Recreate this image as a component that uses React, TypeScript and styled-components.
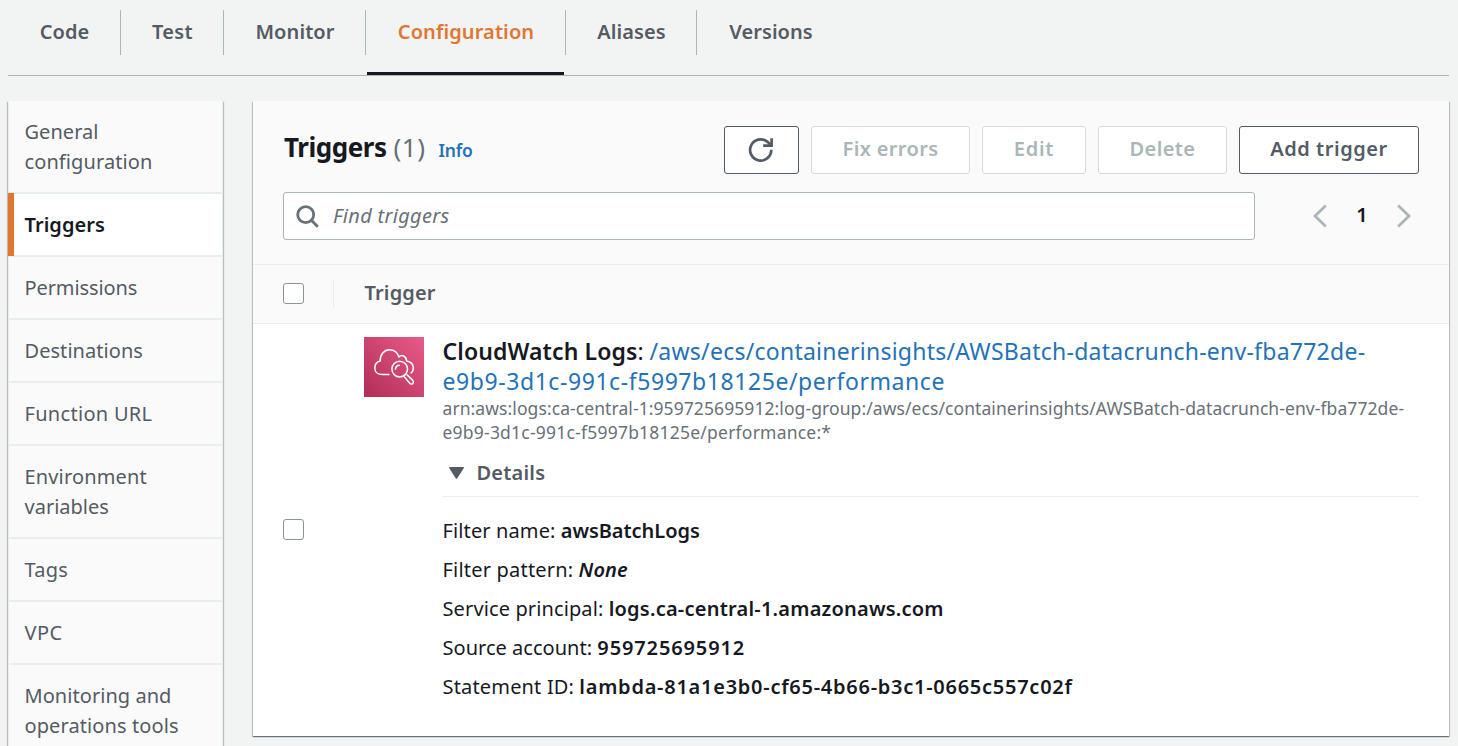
import React from "react";
import styled, { createGlobalStyle, css } from "styled-components";

const colors = {
  page: "#f2f3f3",
  surface: "#fafafa",
  line: "#eaeded",
  text: "#16191f",
  muted: "#545b64",
  soft: "#687078",
  disabled: "#aab7b8",
  accent: "#e07731",
  link: "#2472b8",
};

const GlobalStyle = createGlobalStyle`
  *, *::before, *::after { box-sizing: border-box; }
  html, body { margin: 0; height: 746px; overflow: hidden; background: ${colors.page}; }
  body {
    font: 400 20px/30px "Noto Sans", "Open Sans", sans-serif;
    color: ${colors.text};
  }
  button, input { font: inherit; }
`;

/* Tracking in pixels, tuned for each label */
const Track = styled.span<{ $ls?: number }>`
  letter-spacing: ${(p) => p.$ls ?? 0}px;
`;

const cardShadow = css`
  box-shadow: 0 1px 1px 0 rgba(0, 28, 36, 0.4), 1px 1px 1px 0 rgba(0, 28, 36, 0.18),
    -1px 1px 1px 0 rgba(0, 28, 36, 0.18);
`;

const Page = styled.div`
  height: 746px;
  padding: 0 9px 0 8px;
  overflow: hidden;
`;

const Tabs = styled.nav`
  display: flex;
  height: 76px;
  padding-top: 10px;
  border-bottom: 1px solid #aab7b8;
`;

const Tab = styled.a<{ $width: number; $active?: boolean }>`
  position: relative;
  width: ${(p) => p.$width}px;
  height: 45px;
  padding: 7px 0 0 1px;
  border-right: 1px solid #aab7b8;
  text-align: center;
  line-height: 30px;
  font-weight: 600;
  white-space: nowrap;
  color: ${(p) => (p.$active ? colors.accent : colors.muted)};
  &:last-child { border-right: 0; }
  ${(p) =>
    p.$active &&
    css`
      &::after {
        content: "";
        position: absolute;
        left: 1px;
        right: 1px;
        top: 62px;
        height: 3px;
        background: ${colors.text};
      }
    `}
`;

const Columns = styled.div`
  display: flex;
  align-items: flex-start;
  gap: 30px;
  padding-top: 25px;
`;

const SideNav = styled.nav`
  flex: none;
  width: 215px;
  height: 720px;
  border: solid ${colors.line};
  border-width: 0 1px;
  background: ${colors.surface};
  ${cardShadow}
`;

const SideItem = styled.a<{ $active?: boolean }>`
  position: relative;
  display: block;
  padding: 16px 14px 15px 15.5px;
  border-bottom: 2px solid ${colors.line};
  color: ${colors.muted};
  ${(p) =>
    p.$active &&
    css`
      background: #fff;
      color: ${colors.text};
      font-weight: 600;
      &::before {
        content: "";
        position: absolute;
        left: -1px;
        top: -1px;
        bottom: -1px;
        width: 6px;
        background: ${colors.accent};
      }
    `}
`;

const Line = styled(Track)`
  display: block;
  white-space: nowrap;
`;

const Panel = styled.section`
  flex: 1;
  height: 635px;
  background: #fff;
  ${cardShadow}
`;

const PanelHeader = styled.header`
  height: 164px;
  padding: 25px 30px 0;
  background: ${colors.surface};
  border-bottom: 1px solid ${colors.line};
`;

const HeaderRow = styled.div`
  display: flex;
  align-items: flex-start;
  justify-content: space-between;
`;

const Title = styled.h2`
  display: flex;
  align-items: baseline;
  margin: 0;
  padding: 3px 0 0 1px;
  font-size: 26px;
  line-height: 36px;
  font-weight: 700;
`;

const Count = styled.span`
  margin-left: 7px;
  font-weight: 400;
  letter-spacing: 0.5px;
  color: ${colors.soft};
`;

const InfoLink = styled.a`
  margin-left: 13px;
  font-size: 17.5px;
  font-weight: 600;
  letter-spacing: -0.2px;
  color: ${colors.link};
`;

const Actions = styled.div`
  display: flex;
  gap: 12px;
`;

const Button = styled.button<{ $width: number }>`
  display: flex;
  align-items: center;
  justify-content: center;
  width: ${(p) => p.$width}px;
  height: 48px;
  padding: 0 0 3px;
  border: 1px solid ${colors.muted};
  border-radius: 3px;
  background: #fff;
  color: ${colors.muted};
  font-weight: 600;
  white-space: nowrap;
  &:disabled { border-color: #d5dbdb; color: ${colors.disabled}; }
  svg { margin: 3px 1px 0 0; }
`;

const ToolRow = styled(HeaderRow)`
  margin-top: 18px;
`;

const Search = styled.label`
  display: flex;
  align-items: center;
  width: 972px;
  height: 48px;
  padding-left: 12px;
  border: 1px solid ${colors.disabled};
  border-radius: 3px;
  background: #fff;
  color: ${colors.soft};
  font-style: italic;
  span { margin: 0 0 0 11px; }
`;

const Pager = styled.div`
  display: flex;
  align-items: center;
  justify-content: space-between;
  width: 98px;
  height: 48px;
  margin-right: 8px;
  font-weight: 600;
  span { margin-top: -3px; }
`;

const TableHead = styled.div`
  display: flex;
  align-items: center;
  height: 59px;
  padding: 0 0 2px 30px;
  border-bottom: 1px solid ${colors.line};
  background: ${colors.surface};
  color: ${colors.muted};
  font-weight: 600;
`;

const HeadDivider = styled.div`
  width: 1px;
  height: 29px;
  margin: 0 30.5px 0 29px;
  background: ${colors.line};
`;

const Checkbox = styled.span`
  flex: none;
  width: 21px;
  height: 21px;
  border: 1px solid #879596;
  border-radius: 3px;
  background: #fff;
`;

const TriggerRow = styled.div`
  display: flex;
  height: 412px;
  padding: 0 30px;
`;

const CheckCell = styled.div`
  display: flex;
  align-items: center;
  width: 81px;
  padding-bottom: 1px;
`;

const IconCell = styled.div`
  width: 78.5px;
  padding-top: 13px;
  svg { display: block; }
`;

const Info = styled.div`
  flex: 1;
  min-width: 0;
  padding-top: 12px;
`;

const TriggerName = styled.div`
  font-size: 23px;
  line-height: 30px;
  white-space: nowrap;
  b { font-weight: 600; }
  a { color: ${colors.link}; }
`;

const Arn = styled.div`
  font-size: 17.5px;
  line-height: 24px;
  color: ${colors.soft};
`;

const DetailsToggle = styled.div`
  display: flex;
  align-items: center;
  height: 53px;
  padding: 6px 0 0 6.5px;
  border-bottom: 1px solid ${colors.line};
  gap: 12.5px;
  color: ${colors.muted};
  font-weight: 600;
`;

const DetailList = styled.ul`
  display: flex;
  flex-direction: column;
  gap: 9px;
  margin: 0;
  padding: 19px 0 0;
  list-style: none;
`;

const DetailItem = styled.li<{ $italic?: boolean }>`
  white-space: pre;
  b {
    font-weight: 600;
    font-style: ${(p) => (p.$italic ? "italic" : "normal")};
  }
`;

const RefreshIcon = () => (
  <svg width="26" height="26" viewBox="0 0 26 26" fill="none" stroke="currentColor" strokeWidth="2.7">
    <path d="M23.3 12.8A10.6 10.6 0 1 1 19.2 4.6L22.6 7.8" />
    <path d="M23.6 1.2V8.6H15.2" />
  </svg>
);

const SearchIcon = () => (
  <svg width="26" height="26" viewBox="0 0 26 26" fill="none" stroke="currentColor" strokeWidth="2.8">
    <circle cx="9.7" cy="11.7" r="8" />
    <path d="M15.4 17.3L21.8 23.7" />
  </svg>
);

const Chevron = ({ flip }: { flip?: boolean }) => (
  <svg width="14" height="24" viewBox="0 0 14 24" fill="none" stroke={colors.disabled} strokeWidth="2.8">
    <path d={flip ? "M1.2 1.6L12 12L1.2 22.4" : "M12.8 1.6L2 12L12.8 22.4"} />
  </svg>
);

const CloudWatchIcon = () => (
  <svg width="60" height="60" viewBox="0 0 60 60" fill="none" stroke="#fff" strokeWidth="1.5">
    <defs>
      <linearGradient id="cw" x1="0" y1="1" x2="1" y2="0">
        <stop offset="0" stopColor="#b02e58" />
        <stop offset="1" stopColor="#e95a87" />
      </linearGradient>
    </defs>
    <rect width="60" height="60" fill="url(#cw)" stroke="none" />
    <path
      strokeLinejoin="round"
      d="M25.5 37.6H18.5C13.6 37.6 10.8 34.6 10.8 30.9C10.8 27.6 12.8 25 16.2 24.1C15.9 17.4 20.2 12.8 25.6 12.8C30.2 12.8 33.4 15.3 35 20C37.6 17.2 42.2 18.7 42.6 24C46.6 24.7 49.3 27.4 49.3 31C49.3 33.4 48.4 35.2 46.6 36.3"
    />
    <circle cx="35.7" cy="32.1" r="7.8" />
    <path d="M31.4 32.8C31.4 30 33.2 28.2 36 28.2" />
    <path strokeLinejoin="round" d="M42.6 37.4L48.8 43.4C50.6 45.6 48.2 48.2 46 46.4L40 39.6" />
  </svg>
);

const Caret = () => (
  <svg width="15" height="12" viewBox="0 0 15 12">
    <path d="M0 0.8Q0 0 0.8 0H14.2Q15 0 15 0.8L8.2 11.4Q7.5 12.2 6.8 11.4Z" fill={colors.muted} />
  </svg>
);

const tabs: [string, number, number][] = [
  ["Code", 113, 0],
  ["Test", 103, 0.3],
  ["Monitor", 142, 0.1],
  ["Configuration", 200, 0.1],
  ["Aliases", 131, 0.1],
  ["Versions", 147, 0.05],
];

const sideItems: [string, number][][] = [
  [["General", 0.05], ["configuration", 0.1]],
  [["Triggers", 0.05]],
  [["Permissions", -0.1]],
  [["Destinations", 0.05]],
  [["Function URL", 0.3]],
  [["Environment", 0.15], ["variables", 0]],
  [["Tags", 0.2]],
  [["VPC", 0.5]],
  [["Monitoring and", 0.05], ["operations tools", 0.1]],
];

const details: { label: string; ls: number; value: string; vls: number; italic?: boolean }[] = [
  { label: "Filter name:", ls: 0.12, value: "awsBatchLogs", vls: -0.05 },
  { label: "Filter pattern:", ls: 0.2, value: "None", vls: 0.1, italic: true },
  { label: "Service principal:", ls: 0.12, value: "logs.ca-central-1.amazonaws.com", vls: 0.22 },
  { label: "Source account:", ls: 0.03, value: "959725695912", vls: 0.87 },
  { label: "Statement ID:", ls: 0.17, value: "lambda-81a1e3b0-cf65-4b66-b3c1-0665c557c02f", vls: 0.74 },
];

export default function App() {
  return (
    <Page>
      <GlobalStyle />
      <Tabs>
        {tabs.map(([name, width, ls]) => (
          <Tab key={name} $width={width} $active={name === "Configuration"}>
            <Track $ls={ls}>{name}</Track>
          </Tab>
        ))}
      </Tabs>
      <Columns>
        <SideNav>
          {sideItems.map((lines) => (
            <SideItem key={lines[0][0]} $active={lines[0][0] === "Triggers"}>
              {lines.map(([text, ls]) => (
                <Line key={text} $ls={ls}>{text}</Line>
              ))}
            </SideItem>
          ))}
        </SideNav>
        <Panel>
          <PanelHeader>
            <HeaderRow>
              <Title>
                <Track $ls={-0.45}>Triggers</Track>
                <Count>(1)</Count>
                <InfoLink>Info</InfoLink>
              </Title>
              <Actions>
                <Button $width={75} aria-label="Refresh"><RefreshIcon /></Button>
                <Button $width={159} disabled><Track $ls={0.35}>Fix errors</Track></Button>
                <Button $width={104} disabled><Track $ls={0.7}>Edit</Track></Button>
                <Button $width={129} disabled><Track $ls={0.4}>Delete</Track></Button>
                <Button $width={180}><Track $ls={0.55}>Add trigger</Track></Button>
              </Actions>
            </HeaderRow>
            <ToolRow>
              <Search>
                <SearchIcon />
                <Track $ls={0.3}>Find triggers</Track>
              </Search>
              <Pager>
                <Chevron />
                <span>1</span>
                <Chevron flip />
              </Pager>
            </ToolRow>
          </PanelHeader>
          <TableHead>
            <Checkbox />
            <HeadDivider />
            <Track $ls={0.15}>Trigger</Track>
          </TableHead>
          <TriggerRow>
            <CheckCell><Checkbox /></CheckCell>
            <IconCell><CloudWatchIcon /></IconCell>
            <Info>
              <TriggerName>
                <Track as="b" $ls={0.1}>CloudWatch Logs</Track>:{" "}
                <Track as="a" $ls={0.25}>/aws/ecs/containerinsights/AWSBatch-datacrunch-env-fba772de-</Track>
                <br />
                <Track as="a" $ls={0.57}>e9b9-3d1c-991c-f5997b18125e/performance</Track>
              </TriggerName>
              <Arn>
                <Line $ls={0.08}>
                  arn:aws:logs:ca-central-1:959725695912:log-group:/aws/ecs/containerinsights/AWSBatch-datacrunch-env-fba772de-
                </Line>
                <Line $ls={0.22}>e9b9-3d1c-991c-f5997b18125e/performance:*</Line>
              </Arn>
              <DetailsToggle>
                <Caret />
                <Track $ls={0.2}>Details</Track>
              </DetailsToggle>
              <DetailList>
                {details.map((d) => (
                  <DetailItem key={d.label} $italic={d.italic}>
                    <Track $ls={d.ls}>{d.label}</Track> <Track as="b" $ls={d.vls}>{d.value}</Track>
                  </DetailItem>
                ))}
              </DetailList>
            </Info>
          </TriggerRow>
        </Panel>
      </Columns>
    </Page>
  );
}
